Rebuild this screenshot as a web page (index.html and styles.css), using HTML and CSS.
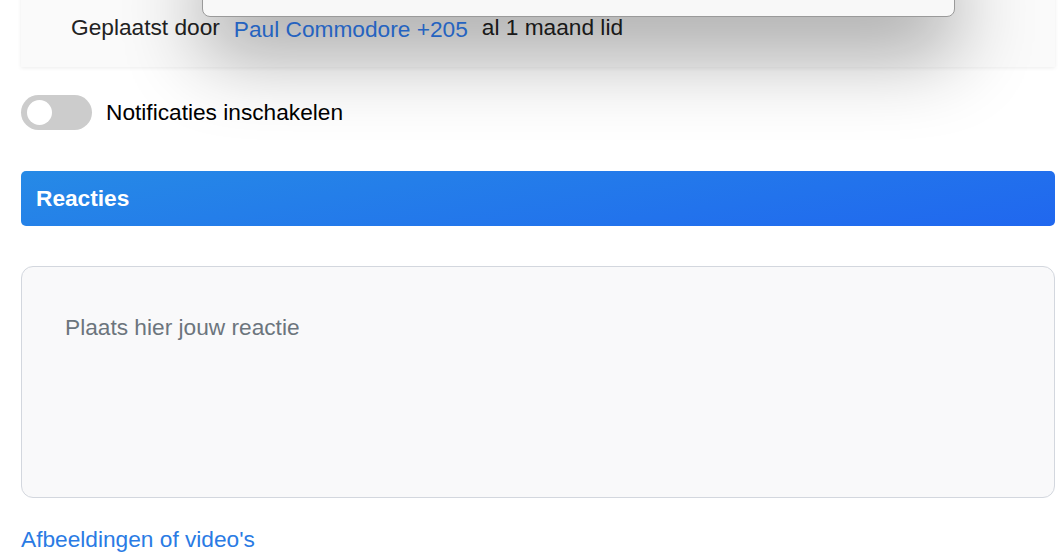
FILE: index.html
```html
<!DOCTYPE html>
<html lang="nl">
<head>
  <title>Onderwerp | Forum</title>
  <meta charset="UTF-8" />
  <meta name="viewport" content="width=device-width, initial-scale=1.0" />
  <link rel="stylesheet" href="styles.css">
</head>
<body>
  <div class="page">
    <div class="post-card">
      <div class="popup"></div>
      <div class="post-meta">
        <span>Geplaatst door</span>
        <a class="author" href="#">Paul Commodore +205</a>
        <span>al 1 maand lid</span>
      </div>
    </div>

    <label class="notify">
      <span class="switch"><span class="knob"></span></span>
      <span>Notificaties inschakelen</span>
    </label>

    <div class="section-head">Reacties</div>

    <div class="reply-box">
      <span class="placeholder">Plaats hier jouw reactie</span>
    </div>

    <a class="media-link" href="#">Afbeeldingen of video's</a>
  </div>
</body>
</html>
```

FILE: styles.css
```css
:root {
  --accent: #2581e8;
  --card: #fafafa;
  --text: #222;
  --link: #2563c0;
}

body {
  margin: 0;
  font-family: 'Liberation Sans', Arial, sans-serif;
  font-size: 22.7px;
  color: var(--text);
  background: #fff;
  overflow: hidden;
}

.page {
  padding: 0 8px 0 21px;
}

.post-card {
  position: relative;
  margin-top: -40px;
  padding: 54px 50px 27px;
  background: var(--card);
  box-shadow: 0 1px 4px rgba(0,0,0,0.08);
}

.popup {
  position: absolute;
  left: 181px;
  right: 100px;
  top: -40px;
  height: 95px;
  background: #f8f8f8;
  border: 1px solid #9a9a9a;
  border-radius: 8px;
  box-shadow: 0 40px 80px rgba(0,0,0,0.32);
}

.post-meta {
  display: flex;
  align-items: baseline;
  gap: 14px;
  line-height: 26px;
}

.author {
  color: var(--link);
  text-decoration: none;
  position: relative;
  top: 2px;
}

.notify {
  display: flex;
  align-items: center;
  gap: 14px;
  margin-top: 28px;
  color: #000;
}

.switch {
  display: flex;
  align-items: center;
  width: 71px;
  height: 35px;
  padding: 0 6px;
  box-sizing: border-box;
  background: #ccc;
  border-radius: 18px;
}

.knob {
  width: 25px;
  height: 25px;
  background: #fff;
  border-radius: 50%;
}

.section-head {
  margin-top: 41px;
  height: 55px;
  padding-left: 15px;
  display: flex;
  align-items: center;
  background: linear-gradient(170deg, #268ae6, #2067ef);
  border-radius: 5px;
  color: #fff;
  font-weight: bold;
}

.reply-box {
  margin-top: 40px;
  height: 232px;
  box-sizing: border-box;
  padding: 47px 43px;
  background: #f9f9fa;
  border: 1px solid #d3d7de;
  border-radius: 12px;
  line-height: 26px;
}

.placeholder {
  color: #6c757d;
}

.media-link {
  display: block;
  margin-top: 28px;
  line-height: 26px;
  color: #2a7be4;
  text-decoration: none;
}
```
